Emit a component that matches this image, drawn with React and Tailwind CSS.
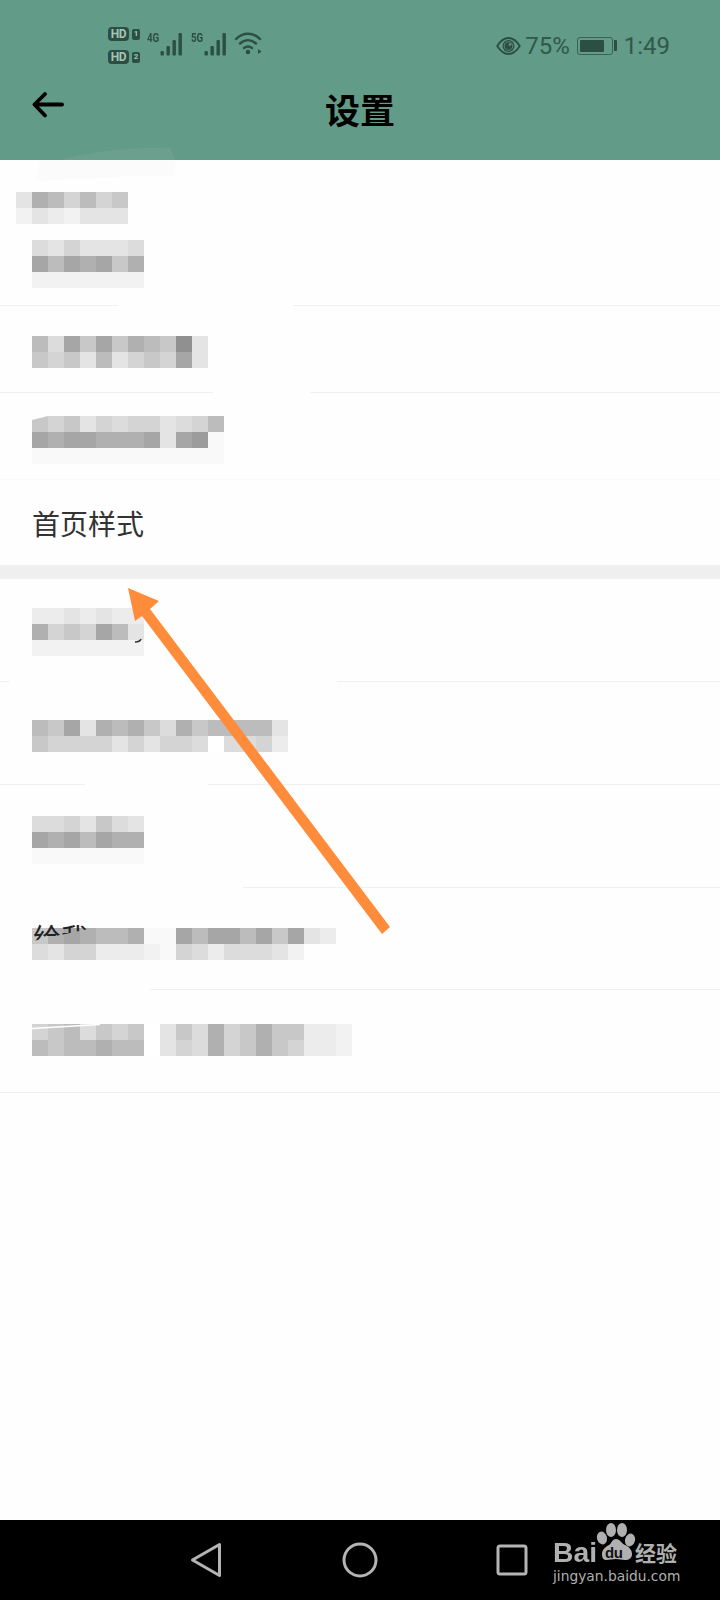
const CELL = {
  "9": "bg-[#909090]", m: "bg-[#9c9c9c]", a: "bg-[#a6a6a6]", b: "bg-[#b0b0b0]", c: "bg-[#bcbcbc]",
  d: "bg-[#c8c8c8]", e: "bg-[#d4d4d4]", f: "bg-[#dcdcdc]", g: "bg-[#e4e4e4]", h: "bg-[#ececec]",
  i: "bg-[#f2f2f2]", j: "bg-[#f9f9f9]", k: "bg-white",
};

function Mosaic({ lines }) {
  return (
    <div className="flex flex-col blur-[0.5px]">
      {lines.map((line, i) => (
        <div key={i} className="flex h-4">
          {line.split("").map((c, j) => (
            <div key={j} className={`h-4 w-4 ${CELL[c]}`} />
          ))}
        </div>
      ))}
    </div>
  );
}

function Bars() {
  return (
    <svg width="24" height="23" viewBox="0 0 24 23" className="text-[#2b4f43]">
      <g fill="currentColor">
        <rect x="0.500" y="18" width="3.400" height="4.500" rx="1" />
        <rect x="6.500" y="13" width="3.400" height="9.500" rx="1" />
        <rect x="12.500" y="7" width="3.400" height="15.500" rx="1" />
        <rect x="18.500" y="0" width="3.400" height="22.500" rx="1" />
      </g>
    </svg>
  );
}

function HD({ n }) {
  return (
    <div className="flex items-center gap-[3px]">
      <div className="flex h-[14px] w-[21px] items-center justify-center rounded-[4px] bg-[#2b4f43] font-['Roboto'] text-[12px] font-bold leading-none tracking-[-0.3px] text-[#a4c6b8]">HD</div>
      <div className="flex h-[11px] w-[8px] items-center justify-center rounded-[2px] bg-[#2b4f43] font-['Roboto'] text-[8px] font-bold leading-none text-[#a4c6b8]">{n}</div>
    </div>
  );
}

function Net({ label }) {
  return (
    <div className="flex items-start">
      <span className="mt-[1px] w-[13px] origin-left scale-x-75 whitespace-nowrap font-['Roboto'] text-[13px] font-bold leading-[11px] text-[#2b4f43]">{label}</span>
      <div className="mt-[2px]"><Bars /></div>
    </div>
  );
}

export default function App() {
  return (
    <div className="relative flex h-[1600px] w-[720px] flex-col overflow-hidden bg-[#fefefe] font-['Noto_Sans_CJK_SC',sans-serif]">
      <header className="flex h-40 flex-col bg-[#629b87]">
        <div className="flex h-[85px] pl-[108px] pr-[50px] pt-[27px]">
          <div className="flex h-[37px] flex-col justify-between">
            <HD n="1" />
            <HD n="2" />
          </div>
          <div className="ml-[7px] flex gap-[7px] pt-[4px]">
            <Net label="4G" />
            <Net label="5G" />
            <svg width="28" height="24" viewBox="0 0 28 24" className="-ml-[1px] text-[#2b4f43]">
              <g fill="none" stroke="currentColor" strokeWidth="2.400" strokeLinecap="round">
                <path d="M2 8C9 1 19 1 26 8" />
                <path d="M6 12.500C11 8 17 8 22 12.500" />
                <path d="M10 17c2.500-2 5.500-2 8 0" />
              </g>
              <circle cx="14" cy="21" r="2.300" fill="currentColor" />
              <path d="M24 18l3.500 2.500-3.500 2.500z" fill="currentColor" />
            </svg>
          </div>
          <div className="ml-auto flex h-[37px] items-center font-['Roboto'] text-[24px] font-normal leading-none text-[#31584b]">
            <svg width="25" height="20" viewBox="0 0 25 20" fill="none" stroke="#2b4f43">
              <path d="M1.200 10C5 4 9 2 12.500 2S20 4 23.800 10C20 16 16 18 12.500 18S5 16 1.200 10Z" strokeWidth="1.800" />
              <circle cx="12.500" cy="10" r="6" fill="#2b4f43" stroke="none" />
              <circle cx="12.500" cy="10" r="4.300" fill="none" stroke="#629b87" strokeWidth="0.800" />
              <circle cx="14" cy="8.500" r="1.300" fill="#629b87" stroke="none" />
            </svg>
            <span className="ml-[4px]">75%</span>
            <div className="ml-[7px] flex items-center">
              <div className="h-[18px] w-[36px] rounded-[3px] border-[1.5px] border-[#3a6153] p-[2px]">
                <div className="h-full w-[24px] rounded-[1px] bg-[#2b4f43]" />
              </div>
              <div className="ml-[1px] h-[11px] w-[3px] rounded-r-[1px] bg-[#2b4f43]" />
            </div>
            <span className="ml-[7px]">1:49</span>
          </div>
        </div>
        <div className="flex items-center px-8">
          <svg className="-mt-1" width="32" height="26" viewBox="0 0 32 26" fill="none" stroke="#000" strokeWidth="3.800" strokeLinecap="round" strokeLinejoin="round">
            <path d="M30 12.500H3" />
            <path d="M13 2 2.500 12.500 13 23.500" />
          </svg>
          <div className="flex-1 pt-1 text-center text-[35px] font-bold leading-[40px] text-black">设置</div>
          <div className="w-8" />
        </div>
      </header>

      <main className="flex flex-1 flex-col">
        <div className="h-[146px] border-b border-[#f1f1f1] pl-4 pt-8">
          <Mosaic lines={["gbceced", "ighiggg"]} />
          <div className="ml-4 mt-4">
            <Mosaic lines={["fgegggf", "acabadb", "iiiiiii"]} />
          </div>
        </div>
        <div className="h-[87px] border-b border-[#f1f1f1] pl-8 pt-[30px]">
          <Mosaic lines={["cfadadbcd9g", "dedgcgedeag"]} />
        </div>
        <div className="h-[87px] border-b border-[#f8f8f8] pl-8 pt-[23px]">
          <Mosaic lines={["dedgefeegfec", "abaabbbagamj", "jjjjjjjjjjjj"]} />
        </div>
        <div className="flex h-[85px] items-center pl-8 text-[28px] leading-none text-[#333]">首页样式</div>
        <div className="h-[14px] bg-[#efefef]" />
        <div className="h-[103px] border-b border-[#f1f1f1] pl-8 pt-[29px]">
          <Mosaic lines={["hhghghh", "bedeacg", "iiiiiii"]} />
        </div>
        <div className="h-[103px] border-b border-[#f1f1f1] pl-8 pt-[38px]">
          <Mosaic lines={["cdagbcbdfbdccccg", "deeeegegeefkffeh"]} />
        </div>
        <div className="h-[103px] border-b border-[#f1f1f1] pl-8 pt-[31px]">
          <Mosaic lines={["ffegdfg", "abacabb", "jjjjjjj"]} />
        </div>
        <div className="relative h-[102px] border-b border-[#f1f1f1] pl-8 pt-10">
          <Mosaic lines={["dbabccbjjacaacadagh", "fgeehhhijefhfffgi"]} />
          <span className="absolute left-[33px] top-[35px] text-[28px] leading-none text-[#222] [clip-path:polygon(0_0,60px_0,60px_5px,0_18px)]">给我</span>
        </div>
        <div className="relative h-[103px] border-b border-[#f1f1f1] pl-8 pt-[34px]">
          <Mosaic lines={["edcfdedkgdfbedbddhhi", "cdccbcckgefbedbdehhi"]} />
        </div>
      </main>

      <nav className="flex h-20 items-center bg-black pb-[1px] pl-[190px] text-[#b4b4b4]">
        <svg width="32" height="36" viewBox="0 0 32 36" fill="none" stroke="currentColor" strokeWidth="3" strokeLinejoin="round">
          <path d="M29.500 2.500V33.500L2.500 18Z" />
        </svg>
        <svg className="ml-[120px]" width="36" height="36" viewBox="0 0 36 36" fill="none" stroke="currentColor" strokeWidth="3">
          <circle cx="18" cy="18" r="16" />
        </svg>
        <svg className="ml-[118px]" width="32" height="32" viewBox="0 0 32 32" fill="none" stroke="currentColor" strokeWidth="3" strokeLinejoin="round">
          <rect x="2" y="2" width="28" height="28" rx="2" />
        </svg>
      </nav>

      <div className="absolute left-[553px] top-[1522px] h-[62px] w-[130px] text-[#b0b0b0]">
        <span className="absolute left-0 top-[18px] origin-left scale-x-105 font-['Liberation_Sans'] text-[27px] font-bold leading-none">Bai</span>
        <svg className="absolute left-0 top-0" width="130" height="62" viewBox="0 0 130 62" fill="currentColor">
          <ellipse cx="49" cy="16" rx="5" ry="6.500" transform="rotate(-15 49 16)" />
          <ellipse cx="58" cy="8" rx="5" ry="7" />
          <ellipse cx="69" cy="8" rx="5" ry="7" />
          <ellipse cx="77" cy="18" rx="5" ry="6.500" transform="rotate(15 77 18)" />
          <path d="M63 17c4 0 5 4 9 6 5 2 7 6 7 9 0 4-3 6-7 6-3 0-6-1-9-1s-7 1-10 1c-3 0-4-3-4-6 0-4 3-7 7-9 3-2 3-6 7-6z" />
        </svg>
        <span className="absolute left-[52px] top-[23px] font-['Liberation_Sans'] text-[15px] font-bold leading-none tracking-[-0.3px] text-[#111]">du</span>
        <span className="absolute left-[82px] top-[20px] text-[21px] font-bold leading-[21px]">经验</span>
        <span className="absolute left-0 top-[45px] whitespace-nowrap font-['DejaVu_Sans'] text-[13.800px] leading-[18px]">jingyan.baidu.com</span>
      </div>

      <svg className="pointer-events-none absolute left-0 top-0" width="720" height="1600" viewBox="0 0 720 1600">
        <path d="M60 160C90 152 130 147 170 148L176 160Z" fill="#fff" fillOpacity="0.05" />
        <path d="M40 160H176L174 176C130 176 70 178 36 182Z" fill="#fbfbfb" />
        <g fill="#fefefe">
          <rect x="118" y="303" width="175" height="4" />
          <rect x="213" y="390" width="97" height="4" />
          <rect x="10" y="679" width="327" height="4" />
          <rect x="85" y="782" width="123" height="4" />
          <rect x="0" y="885" width="243" height="4" />
          <rect x="0" y="987" width="150" height="4" />
          <path d="M32 416H48L32 420Z" />
        </g>
        <path d="M32 1028.500 100 1024.500" stroke="#fff" strokeWidth="1.500" />
        <path d="M135 642Q140 642 141 639" stroke="#333" strokeWidth="1.500" fill="none" />
        <path d="M128 588 159 601 150 609 390 927 382 934 142 616 135 621Z" fill="#ff8c3b" />
      </svg>
    </div>
  );
}
